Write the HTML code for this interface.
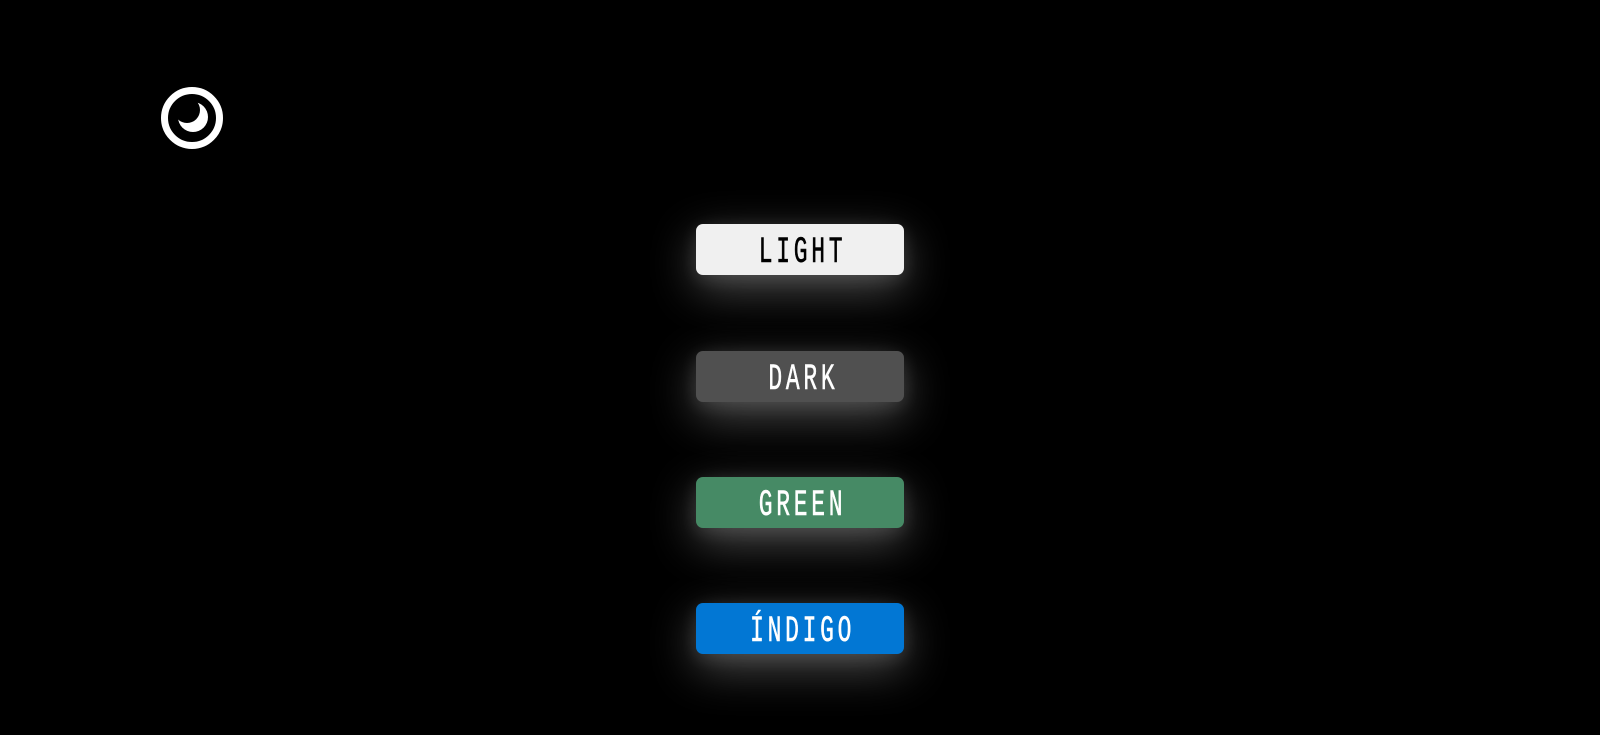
<!DOCTYPE html>
<html><head><meta charset="utf-8"><style>
html,body{margin:0;padding:0;background:#000;width:1600px;height:735px;overflow:hidden}
.btn{position:absolute;left:696px;width:208px;height:51px;border-radius:7px;
box-shadow:0 14px 46px rgba(255,255,255,0.30),0 4px 18px rgba(255,255,255,0.12);
display:flex;align-items:center;justify-content:center}
.btn span{font-family:"Liberation Mono","DejaVu Sans Mono",monospace;font-size:37px;letter-spacing:6px;
display:inline-block;transform:translateY(4px) scaleX(0.62);margin-left:6px;line-height:1;-webkit-text-stroke:0.6px currentColor}
</style></head><body>
<svg style="position:absolute;left:157px;top:83px" width="70" height="70" viewBox="0 0 70 70">
<circle cx="35" cy="35" r="27.5" fill="none" stroke="#fff" stroke-width="7"/>
<defs><mask id="m"><rect width="70" height="70" fill="#fff"/><circle cx="30" cy="27" r="13" fill="#000"/></mask></defs>
<circle cx="36" cy="34" r="15" fill="#fff" mask="url(#m)"/>
</svg>
<div class="btn" style="top:224px;background:#f0f0f0;color:#000"><span>LIGHT</span></div>
<div class="btn" style="top:351px;background:#505050;color:#fff"><span>DARK</span></div>
<div class="btn" style="top:477px;background:#468a65;color:#fff"><span>GREEN</span></div>
<div class="btn" style="top:603px;background:#0277d4;color:#fff"><span>ÍNDIGO</span></div>
</body></html>
